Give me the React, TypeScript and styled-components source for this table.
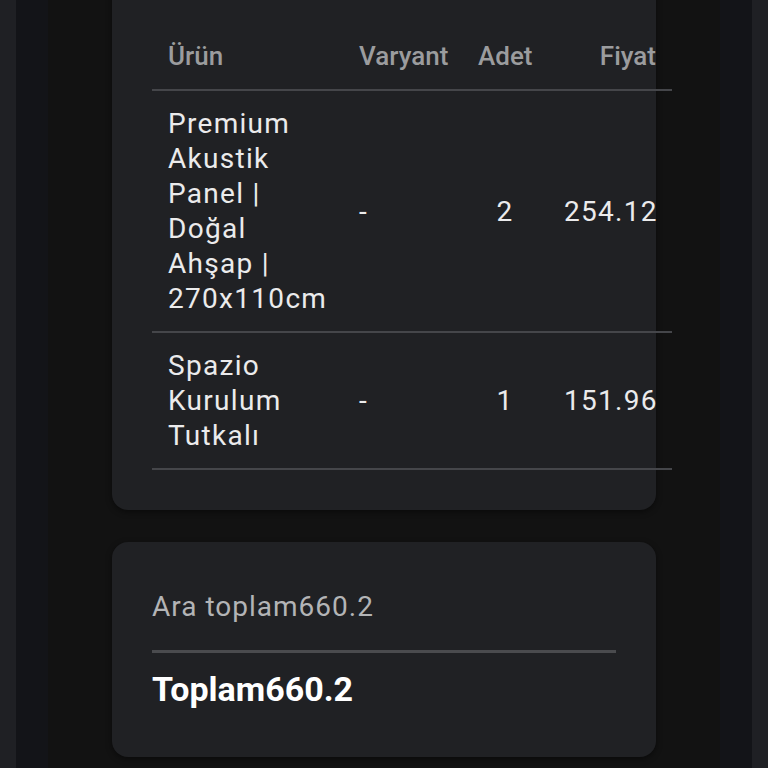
import React from 'react';
import styled, { createGlobalStyle } from 'styled-components';

interface IOrderItem {
	name: string;
	variant: string;
	qty: number;
	price: string;
}

const items: IOrderItem[] = [
	{ name: 'Premium Akustik Panel | Doğal Ahşap | 270x110cm', variant: '-', qty: 2, price: '254.12' },
	{ name: 'Spazio Kurulum Tutkalı', variant: '-', qty: 1, price: '151.96' },
];

const GlobalStyle = createGlobalStyle`
	html, body {
		margin: 0;
		padding: 0;
		background: #121212;
	}
	body {
		font-family: Roboto, 'Liberation Sans', sans-serif;
		overflow: hidden;
	}
`;

const App = () => {
	return (
		<>
			<GlobalStyle />
			<Screen>
				<Edge />
				<Rail />
				<Main>
					<Scroller>
						<Card $bottom={40}>
							<OrderTable>
								<colgroup>
									<col style={{ width: 191 }} />
									<col style={{ width: 119 }} />
									<col style={{ width: 86 }} />
									<col style={{ width: 124 }} />
								</colgroup>
								<thead>
									<tr>
										<HeadCell $align='left'>Ürün</HeadCell>
										<HeadCell $align='left'>Varyant</HeadCell>
										<HeadCell $align='center'>Adet</HeadCell>
										<HeadCell $align='right'>Fiyat</HeadCell>
									</tr>
								</thead>
								<tbody>
									{items.map((item) => (
										<tr key={item.name}>
											<BodyCell $align='left'>{item.name}</BodyCell>
											<BodyCell $align='left'>{item.variant}</BodyCell>
											<BodyCell $align='center'>{item.qty}</BodyCell>
											<BodyCell $align='right'>{item.price}</BodyCell>
										</tr>
									))}
								</tbody>
							</OrderTable>
						</Card>

						<Card $bottom={48}>
							<SubtotalRow>Ara toplam660.2</SubtotalRow>
							<TotalRow>Toplam660.2</TotalRow>
						</Card>
					</Scroller>
				</Main>
				<Rail />
				<Edge />
			</Screen>
		</>
	);
};

const Screen = styled.div`
	display: flex;
	height: 768px;
	overflow: hidden;
	background: #121212;
`;

const Edge = styled.div`
	flex: 0 0 16px;
	background: #1f2024;
`;

const Rail = styled.div`
	flex: 0 0 32px;
	background: #131418;
`;

const Main = styled.div`
	flex: 1;
	padding: 0 64px;
	min-width: 0;
`;

// page is scrolled a little, the first card starts above the top edge
const Scroller = styled.div`
	display: flex;
	flex-direction: column;
	gap: 32px;
	margin-top: -24px;
`;

const Card = styled.div<{ $bottom: number }>`
	background: #202124;
	border-radius: 16px;
	padding: 48px 40px ${(p) => p.$bottom}px;
	box-shadow: 0 2px 6px rgba(0, 0, 0, 0.45);
`;

const OrderTable = styled.table`
	width: 520px;
	table-layout: fixed;
	border-collapse: collapse;
`;

const HeadCell = styled.th<{ $align: string }>`
	text-align: ${(p) => p.$align};
	padding: 15px 16px;
	font-size: 26px;
	line-height: 35px;
	font-weight: 500;
	color: #9b9c9e;
	border-bottom: 2px solid #45464a;
	white-space: nowrap;
`;

const BodyCell = styled.td<{ $align: string }>`
	text-align: ${(p) => p.$align};
	vertical-align: middle;
	padding: 15px 16px;
	font-size: 28px;
	line-height: 35px;
	letter-spacing: 1.3px;
	color: #ebebec;
	border-bottom: 2px solid #45464a;
`;

const SubtotalRow = styled.div`
	font-size: 28px;
	line-height: 32px;
	letter-spacing: 1px;
	color: #b3b4b6;
	padding: 1px 0 27px;
	border-bottom: 3px solid #4a4b4e;
`;

const TotalRow = styled.div`
	font-size: 34px;
	line-height: 40px;
	font-weight: 700;
	color: #ffffff;
	padding-top: 16px;
`;

export default App;
